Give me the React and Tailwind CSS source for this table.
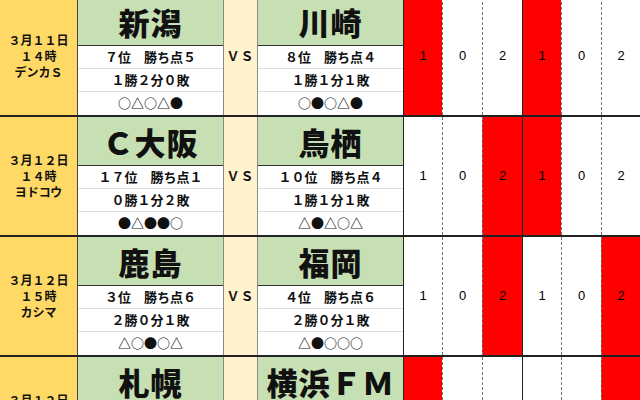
import React from "react";

const matches = [
  {
    date: ["３月１１日", "１４時", "デンカＳ"],
    home: { name: "新潟", rank: "７位　勝ち点５", record: "１勝２分０敗", form: "○△○△●" },
    away: { name: "川崎", rank: "８位　勝ち点４", record: "１勝１分１敗", form: "○●○△●" },
    scores: ["1", "0", "2", "1", "0", "2"],
    red: [0, 3],
  },
  {
    date: ["３月１２日", "１４時", "ヨドコウ"],
    home: { name: "Ｃ大阪", rank: "１７位　勝ち点１", record: "０勝１分２敗", form: "●△●●○" },
    away: { name: "鳥栖", rank: "１０位　勝ち点４", record: "１勝１分１敗", form: "△●△○△" },
    scores: ["1", "0", "2", "1", "0", "2"],
    red: [2, 3],
  },
  {
    date: ["３月１２日", "１５時", "カシマ"],
    home: { name: "鹿島", rank: "３位　勝ち点６", record: "２勝０分１敗", form: "△○●○△" },
    away: { name: "福岡", rank: "４位　勝ち点６", record: "２勝０分１敗", form: "△●○○○" },
    scores: ["1", "0", "2", "1", "0", "2"],
    red: [2, 5],
  },
  {
    date: ["３月１２日", "１４時", "札幌Ｄ"],
    home: { name: "札幌", rank: "１８位　勝ち点０", record: "０勝０分３敗", form: "●●●○△" },
    away: { name: "横浜ＦＭ", rank: "５位　勝ち点６", record: "２勝０分１敗", form: "○○●△●" },
    scores: ["1", "0", "2", "1", "0", "2"],
    red: [0, 5],
  },
];

const scoreWidths = ["w-[39px]", "w-[40px]", "w-[40px]", "w-[39px]", "w-[40px]", "w-[39px]"];
const scoreBorders = [
  "border-l border-l-[#222]",
  "border-l border-dashed border-l-[#777]",
  "border-l border-dashed border-l-[#777]",
  "border-l border-l-[#222]",
  "border-l border-dashed border-l-[#777]",
  "border-l border-dashed border-l-[#777]",
];

const TeamCell = ({ team }) => (
  <div className="flex w-[145px] flex-col">
    <div className="flex h-[48px] items-center justify-center bg-[#c6e0b4] text-[31px] font-black leading-none tracking-[1px] text-[#111]">
      {team.name}
    </div>
    {[team.rank, team.record, team.form].map((line, i) => (
      <div
        key={i}
        className={`flex h-[23px] items-center justify-center border-t bg-white text-[13px] font-bold text-[#111] ${
          i === 0 ? "border-t-[#333]" : "border-t-[#ddd]"
        }`}
      >
        {line}
      </div>
    ))}
  </div>
);

const Block = ({ m }) => (
  <div className="flex h-[120px] border-t-2 border-t-[#222]">
    <div className="flex w-[78px] flex-col items-center justify-center border-r border-r-[#444] bg-[#ffd966] text-[12px] font-bold leading-[16px] text-[#111]">
      {m.date.map((d, i) => (
        <div key={i}>{d}</div>
      ))}
    </div>
    <TeamCell team={m.home} />
    <div className="flex w-[35px] items-center justify-center border-x border-x-[#888] bg-[#fff2cc] text-[13px] font-bold tracking-[1px] text-[#111]">
      ＶＳ
    </div>
    <TeamCell team={m.away} />
    {m.scores.map((s, i) => (
      <div
        key={i}
        className={`flex items-center justify-center font-['Liberation_Sans',Arial,sans-serif] text-[13px] text-black ${scoreWidths[i]} ${scoreBorders[i]} ${
          m.red.includes(i) ? "bg-[#ff0000]" : "bg-white"
        }`}
      >
        {s}
      </div>
    ))}
  </div>
);

export default function App() {
  return (
    <div className="h-[400px] w-[640px] overflow-hidden bg-white font-['Noto_Sans_CJK_JP','Noto_Sans',sans-serif]">
      <div className="-mt-[5px] flex flex-col">
        {matches.map((m, i) => (
          <Block key={i} m={m} />
        ))}
      </div>
    </div>
  );
}
